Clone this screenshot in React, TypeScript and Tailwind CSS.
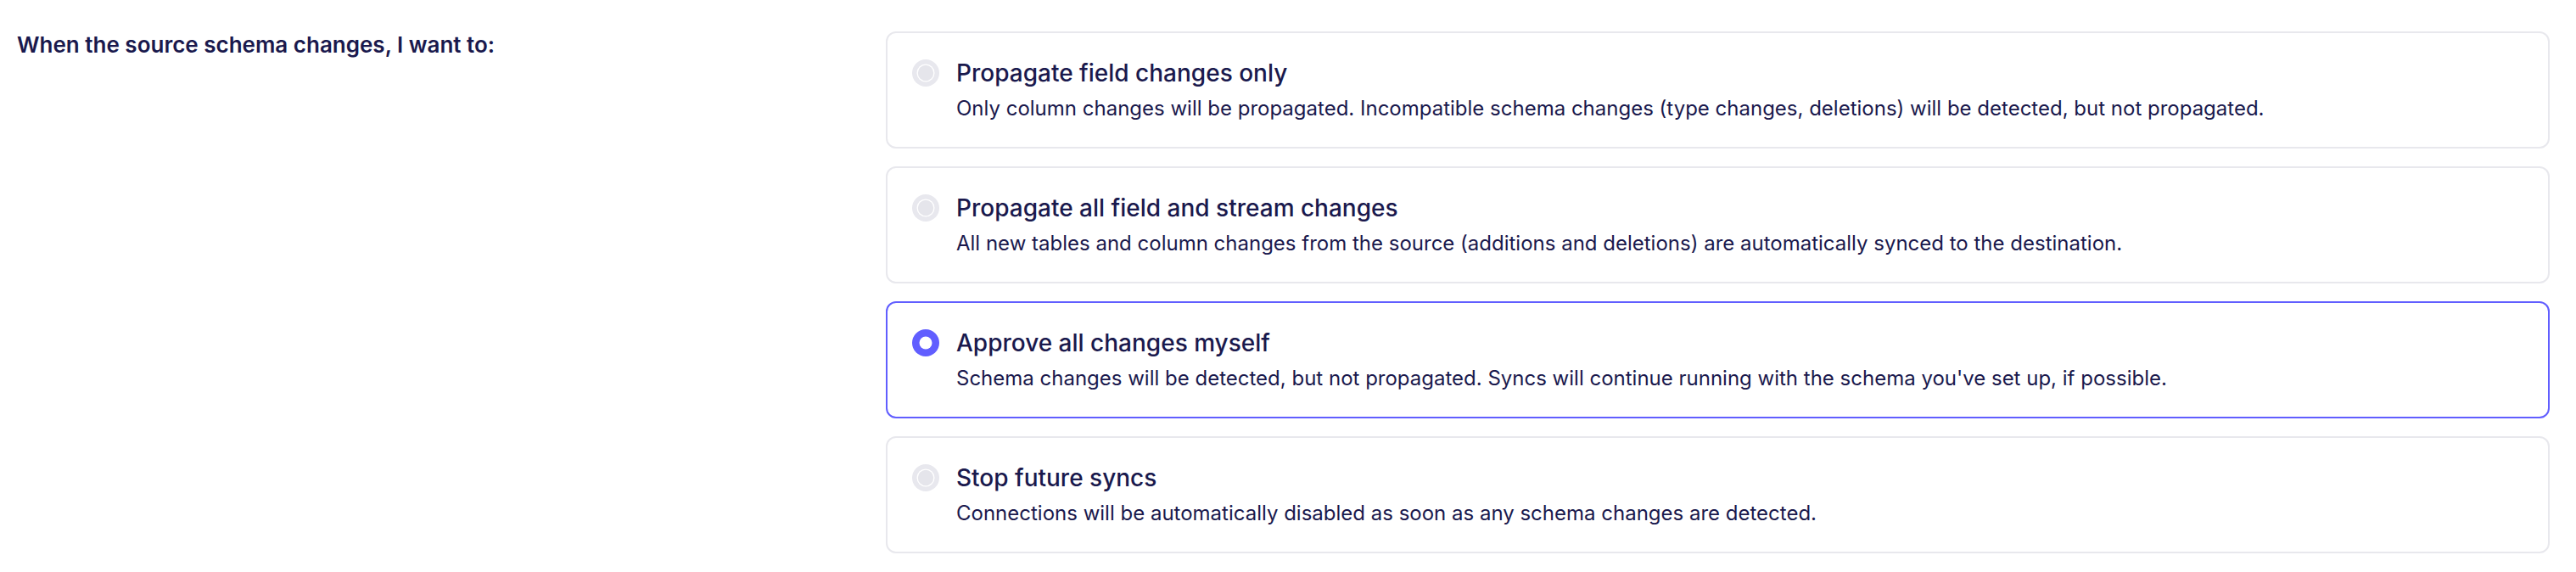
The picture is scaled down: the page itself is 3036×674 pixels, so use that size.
import React, { useState } from 'react';

const options = [
  {
    id: 'propagate_columns',
    label: 'Propagate field changes only',
    description:
      'Only column changes will be propagated. Incompatible schema changes (type changes, deletions) will be detected, but not propagated.',
  },
  {
    id: 'propagate_fully',
    label: 'Propagate all field and stream changes',
    description:
      'All new tables and column changes from the source (additions and deletions) are automatically synced to the destination.',
  },
  {
    id: 'ignore',
    label: 'Approve all changes myself',
    description:
      "Schema changes will be detected, but not propagated. Syncs will continue running with the schema you've set up, if possible.",
  },
  {
    id: 'disable',
    label: 'Stop future syncs',
    description:
      'Connections will be automatically disabled as soon as any schema changes are detected.',
  },
];

const RadioDot = ({ checked }: { checked: boolean }) =>
  checked ? (
    <svg width="32" height="32" viewBox="0 0 32 32" className="shrink-0">
      <circle cx="16" cy="16" r="16" fill="#615eff" />
      <circle cx="16" cy="16" r="7.5" fill="#ffffff" />
    </svg>
  ) : (
    <svg width="32" height="32" viewBox="0 0 32 32" className="shrink-0">
      <circle cx="16" cy="16" r="16" fill="#e8e8ee" />
      <circle cx="16" cy="16" r="10.5" fill="#ffffff" />
      <circle cx="16" cy="16" r="9.2" fill="#e5e5eb" />
    </svg>
  );

const App = () => {
  const [selected, setSelected] = useState('ignore');

  return (
    <div className="flex w-[3036px] h-[674px] bg-white text-[#1a194d] font-['Inter',sans-serif]">
      <div className="w-[1044px] shrink-0 pl-[20px] pt-[35px]">
        <p className="text-[26px] leading-[36px] font-semibold">
          When the source schema changes, I want to:
        </p>
      </div>
      <div className="flex-1 pr-[31px] pt-[37px] flex flex-col gap-[21px]">
        {options.map((o) => {
          const checked = o.id === selected;
          return (
            <label
              key={o.id}
              onClick={() => setSelected(o.id)}
              className={
                checked
                  ? 'flex items-start gap-[20px] h-[138px] rounded-[12px] border-2 border-[#615eff] pl-[29px] pt-[27px] cursor-pointer'
                  : 'flex items-start gap-[20px] h-[138px] rounded-[12px] border-2 border-[#e8e8ed] pl-[29px] pt-[27px] cursor-pointer'
              }
            >
              <div className="pt-[4px]">
                <RadioDot checked={checked} />
              </div>
              <div className="flex flex-col gap-[4px]">
                <span className="text-[28px] leading-[40px] font-medium">{o.label}</span>
                <span className="text-[24px] leading-[36px]">{o.description}</span>
              </div>
            </label>
          );
        })}
      </div>
    </div>
  );
};

export default App;
